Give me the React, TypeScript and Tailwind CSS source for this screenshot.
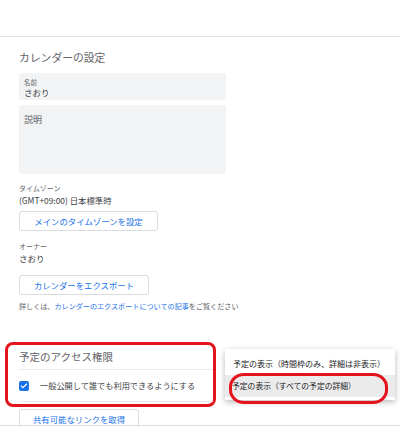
import { Check } from 'lucide-react';

const FONT = '"Noto Sans CJK JP", "Noto Sans", Roboto, sans-serif';

function OutlineButton({ label, width }: { label: string; width: string }) {
  return (
    <div
      className={`${width} h-[20px] flex items-center justify-center rounded-[3px] border border-[#dadce0] text-[8.4px] text-[#1a73e8] leading-none`}
    >
      {label}
    </div>
  );
}

function VisibilityMenu() {
  return (
    <div className="absolute left-[225px] top-[349px] w-[170px] bg-white py-[3px] shadow-[0_2px_6px_rgba(0,0,0,0.28)]">
      <div className="h-[23px] flex items-center pl-[8px] text-[8px] text-[#202124] leading-none">
        予定の表示（時間枠のみ、詳細は非表示）
      </div>
      <div className="h-[22px] flex items-center pl-[7px] text-[7.8px] text-[#202124] leading-none bg-[#ebebeb]">
        予定の表示（すべての予定の詳細）
      </div>
    </div>
  );
}

export default function App() {
  return (
    <div
      className="relative w-[400px] h-[427px] overflow-hidden bg-white text-[#3c4043]"
      style={{ fontFamily: FONT }}
    >
      <div className="h-[37px] border-b border-[#e3e3e3]" />

      <div className="pl-[19px]">
        <h2 className="mt-[13px] h-[14px] flex items-center text-[10.8px] text-[#5f6368] leading-none">
          カレンダーの設定
        </h2>

        <div className="mt-[9px] w-[207px] h-[27px] rounded-[3px] bg-[#f1f3f4] px-[5px] pt-[5px]">
          <div className="h-[8px] flex items-center text-[6.5px] text-[#5f6368] leading-none">名前</div>
          <div className="mt-[1px] h-[11px] flex items-center text-[8.5px] leading-none">さおり</div>
        </div>

        <div className="mt-[5px] w-[207px] h-[69px] rounded-[3px] bg-[#f1f3f4] px-[5px] pt-[9px]">
          <div className="h-[10px] flex items-center text-[9px] text-[#5f6368] leading-none">説明</div>
        </div>

        <div className="mt-[9px] h-[10px] flex items-center text-[7px] text-[#5f6368] leading-none">
          タイムゾーン
        </div>
        <div className="mt-[1px] h-[12px] flex items-center text-[8.4px] leading-none">
          (GMT+09:00) 日本標準時
        </div>

        <div className="mt-[5px]">
          <OutlineButton label="メインのタイムゾーンを設定" width="w-[139px]" />
        </div>

        <div className="mt-[10px] h-[10px] flex items-center text-[7px] text-[#5f6368] leading-none">
          オーナー
        </div>
        <div className="mt-[1px] h-[12px] flex items-center text-[8.5px] leading-none">さおり</div>

        <div className="mt-[11px]">
          <OutlineButton label="カレンダーをエクスポート" width="w-[130px]" />
        </div>

        <p className="mt-[7px] h-[10px] flex items-center text-[7.1px] text-[#5f6368] leading-none">
          詳しくは、
          <span className="text-[#1a73e8]">カレンダーのエクスポートについての記事</span>
          をご覧ください
        </p>
      </div>

      {/* public access section, outlined in red */}
      <section className="mt-[30px] ml-[5px] w-[211px] h-[65px] rounded-[8px] border-[3px] border-[#e4131c] pl-[11px]">
        <h3 className="h-[24px] flex items-center text-[10.5px] text-[#5f6368] leading-none">
          予定のアクセス権限
        </h3>
        <div className="border-t border-[#e8eaed]" />
        <div className="h-[31px] flex items-center gap-[11px]">
          <span className="w-[10px] h-[10px] rounded-[2px] bg-[#1a73e8] flex items-center justify-center">
            <Check className="w-[8px] h-[8px] text-white" strokeWidth={3.5} />
          </span>
          <span className="text-[8.2px] leading-none">一般公開して誰でも利用できるようにする</span>
        </div>
        <div className="border-t border-[#e8eaed]" />
      </section>

      <div className="pl-[19px] mt-[2px]">
        <OutlineButton label="共有可能なリンクを取得" width="w-[120px]" />
      </div>

      <div className="absolute left-0 right-0 top-[425px] border-t border-[#dcdcdc]" />

      <VisibilityMenu />
      <div className="absolute left-[229px] top-[373px] w-[159px] h-[31px] rounded-[15px/14px] border-[3px] border-[#e4131c]" />
    </div>
  );
}
